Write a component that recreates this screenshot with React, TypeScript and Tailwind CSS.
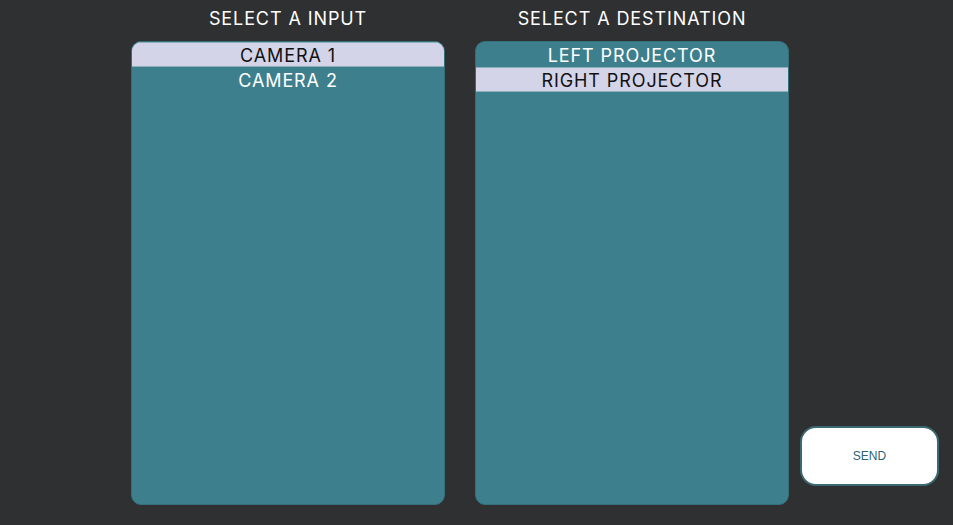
const inputs = ["CAMERA 1", "CAMERA 2"];
const destinations = ["LEFT PROJECTOR", "RIGHT PROJECTOR"];

function List({ title, items, selected }: { title: string; items: string[]; selected: number }) {
  return (
    <div className="flex w-[314px] flex-col">
      <h2 className="h-[41px] pt-[7px] text-center text-[18px] leading-6 tracking-[0.05em] text-white">
        {title}
      </h2>
      <div className="flex-1 overflow-hidden rounded-[10px] border border-[#356e7b] bg-[#3e7f8e]">
        {items.map((item, i) => (
          <div
            key={item}
            className={
              i === selected
                ? "h-[25px] border-y border-[#8fb0bb] bg-[#d4d4e9] pt-px text-center text-[18px] leading-[23px] tracking-[0.05em] text-[#111]"
                : "h-[25px] pt-px text-center text-[18px] leading-[25px] tracking-[0.05em] text-white"
            }
          >
            {item}
          </div>
        ))}
      </div>
    </div>
  );
}

export default function App() {
  return (
    <div className="flex h-screen gap-[30px] bg-[#2f3032] pb-[20px] pl-[131px] font-['Inter',sans-serif]">
      <List title="SELECT A INPUT" items={inputs} selected={0} />
      <List title="SELECT A DESTINATION" items={destinations} selected={1} />
      <div className="ml-[-19px] flex flex-col justify-end pb-[19px]">
        <button className="h-[60px] w-[139px] rounded-[16px] border-2 border-[#3a6973] bg-white font-['Liberation_Sans',sans-serif] text-[12px] text-[#2d6474]">
          SEND
        </button>
      </div>
    </div>
  );
}
